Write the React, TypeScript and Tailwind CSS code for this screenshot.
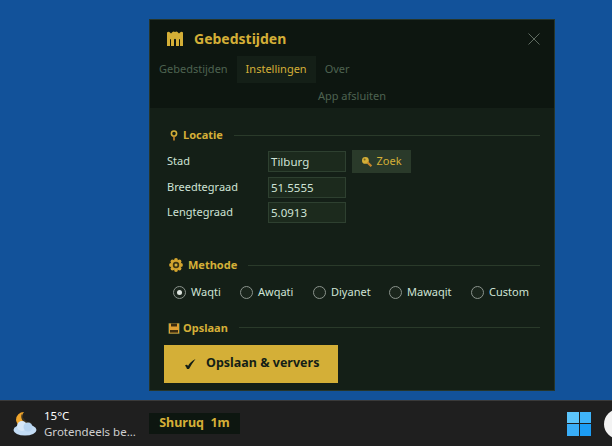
import React from 'react';

const font = { fontFamily: '"Noto Sans", "Open Sans", sans-serif' };

const SectionTitle = ({ icon, title, lineClass }: { icon: React.ReactNode; title: string; lineClass: string }) => (
  <div className={`flex items-center ${lineClass}`}>
    {icon}
    <span className="text-[11px] leading-4 font-bold text-[#d4af37]">{title}</span>
    <div className="ml-[11px] h-px flex-1 bg-[#2a3a2a]" />
  </div>
);

const PinIcon = () => (
  <svg width="8" height="11" viewBox="0 0 8 11" className="mr-[5px] shrink-0">
    <circle cx="4" cy="3.6" r="2.6" fill="none" stroke="#d4af37" strokeWidth="1.6" />
    <path d="M4 6v4.400" stroke="#c8862a" strokeWidth="1.6" />
  </svg>
);

const GearIcon = () => (
  <svg width="14" height="14" viewBox="0 0 14 14" className="mr-[5px] shrink-0">
    <circle cx="7" cy="7" r="5" fill="#c79a2e" />
    {[0, 45, 90, 135, 180, 225, 270, 315].map((a) => (
      <circle
        key={a}
        cx={7 + 5 * Math.cos((a * Math.PI) / 180)}
        cy={7 + 5 * Math.sin((a * Math.PI) / 180)}
        r="1.900"
        fill="#d4a52f"
      />
    ))}
    <circle cx="7" cy="7" r="3.200" fill="#3a3414" />
    <circle cx="7" cy="7" r="1.500" fill="#d4af37" />
  </svg>
);

const SaveIcon = () => (
  <svg width="12" height="11" viewBox="0 0 12 11" className="mr-[3px] mt-[2px] shrink-0">
    <rect x="0" y="0" width="12" height="11" rx="1" fill="#3d5a3a" />
    <rect x="1" y="0.500" width="10" height="10" fill="#e0a032" />
    <rect x="3" y="0.500" width="6" height="3" fill="#3a2c10" />
    <rect x="2" y="7" width="8" height="2.600" fill="#3a2c10" />
  </svg>
);

const KeyIcon = () => (
  <svg width="12" height="12" viewBox="0 0 12 12" className="mr-[3px] shrink-0">
    <circle cx="4.400" cy="4.400" r="3.400" fill="#d4af37" />
    <path d="M6.400 6.400l4 3.800" stroke="#c8862a" strokeWidth="2.200" />
    <circle cx="3.600" cy="3.600" r="1" fill="#7a6420" />
  </svg>
);

const Field = ({ label, value, rowClass }: { label: string; value: string; rowClass: string }) => (
  <div className={`flex items-center ${rowClass}`}>
    <span className="w-[101px] text-[11px] text-[#cfe3d6]">{label}</span>
    <div className="flex h-[21px] w-[78px] items-center border border-[#2e4030] bg-[#1c2a1d] pl-[2px] text-[11.500px] text-[#cfe3d6]">
      {value}
    </div>
  </div>
);

const Radio = ({ label, checked, width }: { label: string; checked?: boolean; width: string }) => (
  <div className={`flex items-center ${width}`}>
    <div className="mr-[5px] flex h-[13px] w-[13px] items-center justify-center rounded-full border border-[#8a938c] bg-[#1a251c]">
      {checked && <div className="h-[5px] w-[5px] rounded-full bg-[#dfe6e0]" />}
    </div>
    <span className="text-[11px] text-[#cfe3d6]">{label}</span>
  </div>
);

export default function App() {
  return (
    <div className="relative flex h-[446px] w-[612px] flex-col overflow-hidden bg-[#12529a]" style={font}>
      <div className="flex-1" />

      {/* instellingen venster */}
      <div className="absolute left-[149px] top-[19px] flex h-[372px] w-[406px] flex-col border border-[#26352a] bg-[#141f17]">
        <div className="h-[88px] bg-[#0d1610]">
          <div className="flex h-[36px] items-center pl-[16px] pr-[14px]">
            <svg width="18" height="15" viewBox="0 0 18 15" className="shrink-0">
              <path
                d="M1 1.500Q2.500 0 4 1.500L5 2.500 6.500 1Q7.500 0 9 1 10.500 0 11.500 1L13 2.500 14 1.500Q15.500 0 17 1.500V15H14V8.500Q13.500 7.500 13 8.500V15H10V8.500Q9 7 8 8.500V15H5V8.500Q4.500 7.500 4 8.500V15H1z"
                fill="#d4af37"
              />
            </svg>
            <span className="ml-[10px] text-[14px] font-bold text-[#d4af37]">Gebedstijden</span>
            <svg width="12" height="12" viewBox="0 0 12 12" className="ml-auto mt-px">
              <path d="M0.500 0.500l11 11M11.500 0.500l-11 11" stroke="#5e6a60" strokeWidth="1" />
            </svg>
          </div>
          <div className="flex h-[27px] items-center text-[11px]">
            <span className="ml-[9px] text-[#4d6350]">Gebedstijden</span>
            <span className="ml-[9px] flex h-[27px] w-[79px] items-center justify-center bg-[#141f17] text-[#d4af37]">
              Instellingen
            </span>
            <span className="ml-[9px] text-[#4d6350]">Over</span>
          </div>
          <div className="flex h-[25px] justify-center pt-[5px] text-[11px] leading-4 text-[#4d6350]">App afsluiten</div>
        </div>

        <div className="flex flex-1 flex-col pl-[14px] pr-[14px] pt-[19px]">
          <SectionTitle icon={<PinIcon />} title="Locatie" lineClass="pl-[6px]" />
          <div className="mt-[7px] pl-[3px]">
            <div className="flex items-center">
              <Field label="Stad" value="Tilburg" rowClass="" />
              <div className="ml-[6px] flex h-[23px] w-[59px] items-center justify-center bg-[#2a3a2a] text-[11px] text-[#d4af37]">
                <KeyIcon />
                Zoek
              </div>
            </div>
            <Field label="Breedtegraad" value="51.5555" rowClass="mt-[4px]" />
            <Field label="Lengtegraad" value="5.0913" rowClass="mt-[4px]" />
          </div>

          <div className="mt-[34px]">
            <SectionTitle icon={<GearIcon />} title="Methode" lineClass="pl-[5px]" />
          </div>
          <div className="mt-[11px] flex pl-[9px]">
            <Radio label="Waqti" checked width="w-[67px]" />
            <Radio label="Awqati" width="w-[73px]" />
            <Radio label="Diyanet" width="w-[76px]" />
            <Radio label="Mawaqit" width="w-[82px]" />
            <Radio label="Custom" width="w-[62px]" />
          </div>

          <div className="mt-[19px]">
            <SectionTitle icon={<SaveIcon />} title="Opslaan" lineClass="pl-[4px]" />
          </div>
          <div className="mt-[9px] flex h-[38px] w-[174px] items-center bg-[#d4af37] text-[12.500px] font-bold text-[#141f17]">
            <svg width="11" height="10" viewBox="0 0 11 10" className="ml-[21px] mr-[10px] shrink-0">
              <path d="M0 6.500Q2 5 3 7 5 3 10.500 0 7 4.500 4 10H2Q1.500 8 0 6.500z" fill="#141f17" />
            </svg>
            Opslaan &amp; ververs
          </div>
        </div>
      </div>

      {/* taakbalk */}
      <div className="flex h-[46px] items-center border-t border-[#3a3a3a] bg-[#1f1f1f]">
        <svg width="26" height="26" viewBox="0 0 26 26" className="ml-[12px] shrink-0">
          <path d="M12 1a8 8 0 0 0-8 8 8 8 0 0 0 13 5 8 8 0 0 1-5-13z" fill="#f0a52c" />
          <path d="M10 2.500a7 7 0 0 0 7 10l3-1a9 9 0 0 1-10-9z" fill="#3b3320" />
          <ellipse cx="13" cy="19" rx="11.500" ry="5.500" fill="#c3dcf5" />
          <circle cx="10" cy="15" r="5" fill="#d6e7f8" />
          <circle cx="16" cy="16" r="4.500" fill="#b7d4f0" />
        </svg>
        <div className="ml-[6px] w-[105px] shrink-0 text-[11.500px] leading-[16px]">
          <div className="text-white">15°C</div>
          <div className="text-[#cfcfcf]">Grotendeels be...</div>
        </div>
        <div className="flex h-[21px] w-[91px] shrink-0 items-center justify-center bg-[#0d1610] text-[12.500px] font-bold text-[#d4af37]">
          Shuruq&nbsp;&nbsp;1m
        </div>
        <div className="ml-[327px] grid h-[24px] w-[24px] shrink-0 grid-cols-2 gap-px">
          <div className="bg-[#5cc5fb]" />
          <div className="bg-[#3fb4fa]" />
          <div className="bg-[#39aef8]" />
          <div className="bg-[#1c9df5]" />
        </div>
        <div className="ml-[13px] h-[30px] w-[30px] shrink-0 rounded-full bg-[#f3f3f3]" />
      </div>
    </div>
  );
}
